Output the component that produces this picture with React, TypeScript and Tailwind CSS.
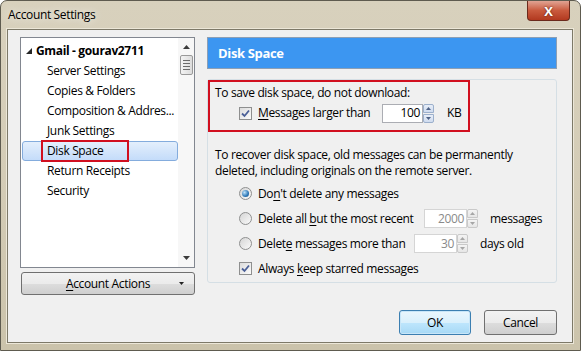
import React from 'react';

const Check: React.FC = () => (
  <span className="flex h-[13px] w-[13px] shrink-0 items-center justify-center border border-[#8e8f8f] bg-gradient-to-br from-[#dcdcdc] to-[#fbfbfb]">
    <svg width="9" height="9" viewBox="0 0 9 9">
      <path d="M1 4.5 L3.5 7 L8 1.5" fill="none" stroke="#4a5f97" strokeWidth="1.8" />
    </svg>
  </span>
);

const Radio: React.FC<{ on?: boolean }> = ({ on }) => (
  <span className="flex h-[13px] w-[13px] shrink-0 items-center justify-center rounded-full border border-[#8e8f8f] bg-gradient-to-br from-[#d5d5d5] to-[#fafafa]">
    {on && (
      <span className="h-[7px] w-[7px] rounded-full bg-[radial-gradient(circle_at_35%_35%,#bfe3fb,#2d77b6_60%,#1d4f86)]" />
    )}
  </span>
);

const Spinner: React.FC<{ active?: boolean }> = ({ active }) => {
  const arrow = active ? '#4d6185' : '#a6a6a6';
  const box = active
    ? 'border-[#9cb0cc] bg-gradient-to-b from-[#e8eef8] to-[#cfdcef]'
    : 'border-[#c9c9c9] bg-gradient-to-b from-[#f4f4f4] to-[#e6e6e6]';
  return (
    <span className="flex w-[11px] flex-col gap-[1px]">
      <span className={`flex flex-1 items-center justify-center rounded-t-[2px] border ${box}`}>
        <svg width="5" height="3" viewBox="0 0 5 3">
          <path d="M0 3 L2.5 0 L5 3 Z" fill={arrow} />
        </svg>
      </span>
      <span className={`flex flex-1 items-center justify-center rounded-b-[2px] border ${box}`}>
        <svg width="5" height="3" viewBox="0 0 5 3">
          <path d="M0 0 L2.5 3 L5 0 Z" fill={arrow} />
        </svg>
      </span>
    </span>
  );
};

const NumBox: React.FC<{ value: string; width: string; active?: boolean }> = ({ value, width, active }) => (
  <span className={`flex h-[19px] ${width}`}>
    <span
      className={`flex flex-1 items-center justify-end border pr-[2px] ${
        active ? 'border-[#abadb3] bg-white text-black' : 'border-[#d5d5d5] bg-white text-[#8a8a8a]'
      }`}
    >
      {value}
    </span>
    <Spinner active={active} />
  </span>
);

const treeItems = ['Server Settings', 'Copies & Folders', 'Composition & Addres...', 'Junk Settings'];

const App: React.FC = () => {
  return (
    <div className="relative h-[351px] w-[581px] overflow-hidden rounded-t-[7px] border border-[#5e5b4f] bg-gradient-to-b from-[#d8d1bd] via-[#d4ccb6] to-[#cbc3ab] font-['Open_Sans',sans-serif] text-[12px] leading-[16px] tracking-[-0.35px] text-black">
      {/* Title bar */}
      <div className="flex h-[28px] items-start justify-between">
        <span className="pl-[7px] pt-[6px] text-[12px] text-black [text-shadow:0_0_8px_#fff]">Account Settings</span>
        <span className="mr-[10px] flex h-[20px] w-[43px] items-center justify-center rounded-b-[4px] border border-t-0 border-[#6b2a1c] bg-gradient-to-b from-[#e0a393] via-[#c95a3e] to-[#b2391f] text-[13px] font-bold tracking-normal text-white [text-shadow:0_0_2px_#4a1206]">
          X
        </span>
      </div>

      {/* Client area */}
      <div className="ml-[6px] mr-[7px] flex h-[314px] flex-col border border-[#7d7968] bg-[#f0f0f0] shadow-[0_0_0_1px_#ece7d8]">
        <div className="flex gap-[12px] pl-[12px] pt-[7px]">
          {/* Left column */}
          <div className="flex w-[175px] flex-col gap-[4px]">
            <div className="flex h-[231px] border border-[#828790] bg-white">
              <div className="flex flex-1 flex-col pt-[3px]">
                <div className="flex h-[20px] items-center pl-[5px] font-bold">
                  <svg width="7" height="7" viewBox="0 0 7 7" className="mr-[3px]">
                    <path d="M6 0 L6 6 L0 6 Z" fill="#262626" />
                  </svg>
                  Gmail - gourav2711
                </div>
                {treeItems.map((t) => (
                  <div key={t} className="flex h-[20px] items-center whitespace-nowrap pl-[26px]">
                    {t}
                  </div>
                ))}
                <div className="relative ml-[1px] flex h-[20px] items-center rounded-[3px] border border-[#84acdd] bg-gradient-to-b from-[#e4effc] to-[#c4dcfa] pl-[24px]">
                  <span className="absolute left-[18px] top-[-2px] h-[22px] w-[88px] border-2 border-[#d10f1f]" />
                  Disk Space
                </div>
                <div className="flex h-[20px] items-center pl-[26px]">Return Receipts</div>
                <div className="flex h-[20px] items-center pl-[26px]">Security</div>
              </div>
              {/* Scrollbar */}
              <div className="flex w-[16px] flex-col items-center bg-[#f7f7f7] py-[1px]">
                <div className="flex h-[16px] items-center justify-center">
                  <svg width="7" height="4" viewBox="0 0 7 4">
                    <path d="M0 4 L3.5 0 L7 4 Z" fill="#3c3c3c" />
                  </svg>
                </div>
                <div className="flex h-[20px] w-[13px] flex-col items-center justify-center gap-[2px] rounded-[2px] border border-[#9a9a9a] bg-gradient-to-r from-[#f3f3f3] to-[#dcdcdc]">
                  <span className="h-px w-[7px] bg-[#6b6b6b]" />
                  <span className="h-px w-[7px] bg-[#6b6b6b]" />
                  <span className="h-px w-[7px] bg-[#6b6b6b]" />
                  <span className="h-px w-[7px] bg-[#6b6b6b]" />
                </div>
                <div className="flex-1" />
                <div className="flex h-[16px] items-center justify-center">
                  <svg width="7" height="4" viewBox="0 0 7 4">
                    <path d="M0 0 L3.5 4 L7 0 Z" fill="#3c3c3c" />
                  </svg>
                </div>
              </div>
            </div>
            <button className="relative ml-[1px] flex h-[23px] items-center justify-center rounded-[3px] border border-[#707070] bg-[linear-gradient(#f2f2f2_0%,#ebebeb_50%,#dddddd_51%,#cfcfcf_100%)]">
              <span>
                <span className="underline underline-offset-2">A</span>ccount Actions
              </span>
              <svg width="5" height="3" viewBox="0 0 5 3" className="absolute right-[10px] top-[9px]">
                <path d="M0 0 L2.5 3 L5 0 Z" fill="#222" />
              </svg>
            </button>
          </div>

          {/* Right column */}
          <div className="flex w-[350px] flex-col gap-[10px]">
            <div className="flex h-[32px] items-center border border-[#8d9fb4] bg-[#3c96f1] pl-[10px] text-[13px] font-bold text-white">
              Disk Space
            </div>
            <div className="flex h-[204px] flex-col rounded-[3px] border border-[#d5dfe5]">
              <div className="flex h-[52px] w-[262px] flex-col border-2 border-[#d10f1f] pl-[5px] pt-[3px]">
                <div className="h-[16px]">To save disk space, do not download:</div>
                <div className="mt-[1px] flex h-[22px] items-center pl-[24px]">
                  <Check />
                  <span className="ml-[6px] w-[124px] whitespace-nowrap">
                    <span className="underline underline-offset-2">M</span>essages larger than
                  </span>
                  <NumBox value="100" width="w-[52px]" active />
                  <span className="ml-[13px]">KB</span>
                </div>
              </div>
              <div className="mt-[15px] pl-[7px]">
                <div>To recover disk space, old messages can be permanently</div>
                <div>deleted, including originals on the remote server.</div>
              </div>
              <div className="flex flex-col pl-[31px] pt-[2px]">
                <div className="flex h-[25px] items-center">
                  <Radio on />
                  <span className="ml-[6px]">
                    Do<span className="underline underline-offset-2">n</span>'t delete any messages
                  </span>
                </div>
                <div className="flex h-[25px] items-center">
                  <Radio />
                  <span className="ml-[6px] w-[166px] whitespace-nowrap">
                    Delete all <span className="underline underline-offset-2">b</span>ut the most recent
                  </span>
                  <NumBox value="2000" width="w-[54px]" />
                  <span className="ml-[12px]">messages</span>
                </div>
                <div className="flex h-[25px] items-center">
                  <Radio />
                  <span className="ml-[6px] w-[156px] whitespace-nowrap">
                    Delet<span className="underline underline-offset-2">e</span> messages more than
                  </span>
                  <NumBox value="30" width="w-[54px]" />
                  <span className="ml-[12px]">days old</span>
                </div>
                <div className="flex h-[25px] items-center">
                  <Check />
                  <span className="ml-[6px]">
                    Always <span className="underline underline-offset-2">k</span>eep starred messages
                  </span>
                </div>
              </div>
            </div>
          </div>
        </div>

        {/* Dialog buttons */}
        <div className="mt-[15px] flex justify-end gap-[13px] pr-[15px]">
          <button className="h-[25px] w-[72px] rounded-[3px] border border-[#3c7fb1] bg-[linear-gradient(#eaf6fd_0%,#d9f0fc_50%,#bee6fd_51%,#a7d9f5_100%)] shadow-[inset_0_0_0_1px_#c8e6f8]">
            OK
          </button>
          <button className="h-[25px] w-[73px] rounded-[3px] border border-[#707070] bg-[linear-gradient(#f2f2f2_0%,#ebebeb_50%,#dddddd_51%,#cfcfcf_100%)]">
            Cancel
          </button>
        </div>
      </div>
    </div>
  );
};

export default App;
